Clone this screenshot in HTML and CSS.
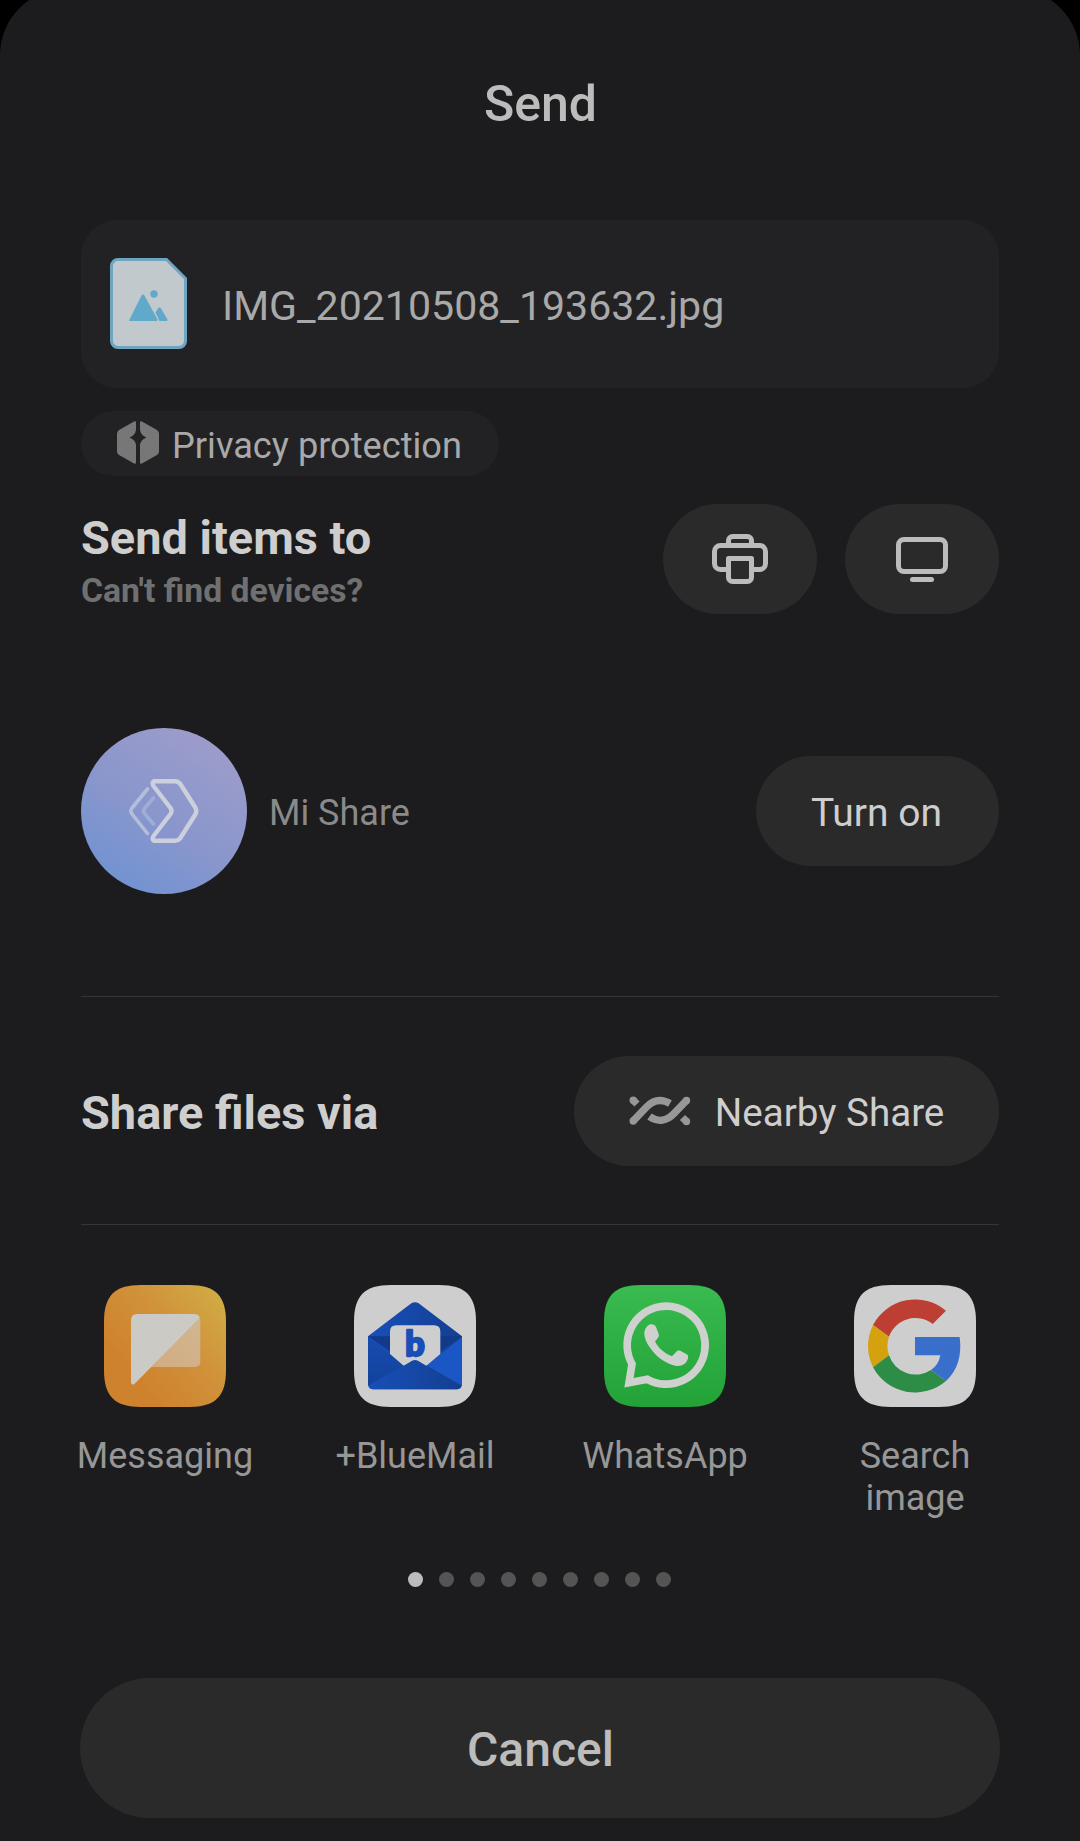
FILE: index.html
```html
<!DOCTYPE html>
<html lang="en">
<head>
  <meta charset="UTF-8">
  <meta name="viewport" content="width=device-width, initial-scale=1.0">
  <title>Send</title>
  <link rel="stylesheet" href="styles.css">
</head>
<body>
  <div class="sheet">
    <h1 class="title">Send</h1>

    <div class="file-card">
      <svg class="file-icon" viewBox="0 0 77 91">
        <path d="M8 1.5H56.5L75.5 20.5V83a6.500 6.500 0 0 1-6.500 6.500H8A6.500 6.500 0 0 1 1.500 83V8A6.500 6.500 0 0 1 8 1.500Z" fill="#c2c9cc" stroke="#6ea6c2" stroke-width="3"/>
        <path d="M31.500 37.500q1.500-2 3 0L47.500 61.500q.5 1.500-1 1.500H20.500q-2 0-1-1.500Z" fill="#61a9cb"/>
        <path d="M45.500 54.500L48 50.500q1.500-2 3 0L57.500 61.500q.5 1.500-1 1.500H49.500Z" fill="#61a9cb"/>
        <circle cx="44" cy="36" r="3.700" fill="#61a9cb"/>
      </svg>
      <span class="file-name">IMG_20210508_193632.jpg</span>
    </div>

    <div class="privacy">
      <svg class="privacy-icon" viewBox="0 0 42 43">
        <path d="M17.500 0.300Q19 0 19 1.500V9Q18 14.500 12.500 16.500Q18 18.500 19 23.500V41.500Q19 43 17.500 42.700L2 34Q0 32.500 0 30.500V12.500Q0 10.500 2 9Z"/>
        <path d="M24.500 0.300Q23 0 23 1.500V9Q24 14.500 29.500 16.500Q24 18.500 23 23.500V41.500Q23 43 24.500 42.700L40 34Q42 32.500 42 30.500V12.500Q42 10.500 40 9Z"/>
      </svg>
      <span>Privacy protection</span>
    </div>

    <div class="row send-row">
      <div class="send-text">
        <h2>Send items to</h2>
        <p>Can't find devices?</p>
      </div>
      <div class="device-buttons">
        <button class="pill icon-pill" aria-label="Print">
          <svg width="56" height="50" viewBox="0 0 56 50" fill="none" stroke="#bcbcbc" stroke-width="5">
            <path d="M16.500 11V6.500a4 4 0 0 1 4-4h15a4 4 0 0 1 4 4V11"/>
            <path d="M16 35.500H8.500a6 6 0 0 1-6-6v-12a6 6 0 0 1 6-6h39a6 6 0 0 1 6 6v12a6 6 0 0 1-6 6H40"/>
            <path d="M16.500 24.500h23v19a4 4 0 0 1-4 4h-15a4 4 0 0 1-4-4Z" stroke-linejoin="round"/>
          </svg>
        </button>
        <button class="pill icon-pill cast" aria-label="Cast">
          <svg width="52" height="46" viewBox="0 0 52 46" fill="none" stroke="#bcbcbc" stroke-width="5">
            <rect x="2.500" y="2.500" width="47" height="32" rx="5.500"/>
            <path d="M16.500 42.500h19" stroke-linecap="round"/>
          </svg>
        </button>
      </div>
    </div>

    <div class="row mi-row">
      <div class="mi-share">
        <div class="mi-avatar">
          <svg width="70" height="64" viewBox="0 0 70 64" fill="none" stroke-linecap="round" stroke-linejoin="round" stroke-width="4.400">
            <path d="M25 2.200H46Q49 2.200 51 4.500L66 28Q68.500 32 66 36L51 59.500Q49 61.800 46 61.800H25Q22.500 60.500 24.500 57L41.500 35Q43.500 32 41.500 29L24.500 7Q22.500 3.500 25 2.200Z" stroke="#ccd0dc"/>
            <path d="M18.500 10L3 29Q.7 32 3 35L18.500 54.500" stroke="#b3bedb" stroke-width="3.600"/>
            <path d="M24.500 19L15.500 29.500Q13.500 32 15.500 34.500L24.500 45" stroke="#9eaed8" stroke-width="3.600"/>
          </svg>
        </div>
        <span>Mi Share</span>
      </div>
      <button class="pill turn-on">Turn on</button>
    </div>

    <div class="row share-row">
      <h2>Share files via</h2>
      <button class="pill nearby">
        <svg width="62" height="30" viewBox="0 0 62 30" fill="none" stroke="#979797" stroke-width="7.400">
          <path d="M4.200 25L17 11.500C25 3 33 3 41 7.500"/>
          <path d="M20.500 20.500C29 26.500 38 25 45 17.500L57.500 4.500"/>
          <path d="M4.200 25h.01M57.500 4.500h.01M4.200 4.200h.01M57.500 25.500h.01" stroke-linecap="round"/>
          <path d="M4.200 4.200L8 8M53.500 21.500L57.500 25.500"/>
        </svg>
        <span>Nearby Share</span>
      </button>
    </div>

    <div class="apps">
      <div class="app">
        <svg class="app-icon" viewBox="0 0 366 366">
          <defs>
            <linearGradient id="msg" x1="0.250" y1="0.750" x2="1" y2="0.100">
              <stop offset="0" stop-color="#cf822e"/>
              <stop offset="0.500" stop-color="#d0923a"/>
              <stop offset="1" stop-color="#d1ac44"/>
            </linearGradient>
            <linearGradient id="msgFold" x1="0" y1="1" x2="1" y2="0">
              <stop offset="0" stop-color="#d4ab80"/>
              <stop offset="1" stop-color="#cfb792"/>
            </linearGradient>
            <path id="tile" d="M0 110C0 32 32 0 110 0H256C334 0 366 32 366 110V256C366 334 334 366 256 366H110C32 366 0 334 0 256Z"/>
          </defs>
          <use href="#tile" fill="url(#msg)"/>
          <path d="M141 246L285 94Q289 98 289 105V229Q289 246 272 246Z" fill="url(#msgFold)"/>
          <path d="M99 87H271Q280 87 286 94Q286 99 280 106L92 296Q81 303 81 291V105Q81 87 99 87Z" fill="#cbcac5"/>
        </svg>
        <span>Messaging</span>
      </div>
      <div class="app">
        <svg class="app-icon" viewBox="0 0 366 366">
          <defs>
            <linearGradient id="flap" x1="0" x2="1">
              <stop offset="0" stop-color="#184fb7"/>
              <stop offset="1" stop-color="#133f92"/>
            </linearGradient>
            <linearGradient id="side" x1="0" x2="0" y1="0" y2="1">
              <stop offset="0" stop-color="#174bb0"/>
              <stop offset="1" stop-color="#12429b"/>
            </linearGradient>
          </defs>
          <use href="#tile" fill="#cecece"/>
          <path d="M42 154L172 55Q183 48 194 55L324 154V297Q324 313 308 313H58Q42 313 42 297Z" fill="url(#flap)"/>
          <path d="M42 154H324L183 250Z" fill="#12398a"/>
          <path d="M42 156L149 241L42 302Z" fill="url(#side)"/>
          <path d="M324 156L217 241L324 302Z" fill="#1b57c4"/>
          <path d="M108 140Q108 121 127 121H240Q259 121 259 140V207L217 242L149 242L108 207Z" fill="#cecece"/>
          <path d="M46 303L168 231Q183 219 198 231L320 303Q317 313 308 313H58Q49 313 46 303Z" fill="url(#flap)"/>
          <text x="183" y="213" text-anchor="middle" class="bm-letter">b</text>
        </svg>
        <span>+BlueMail</span>
      </div>
      <div class="app">
        <svg class="app-icon" viewBox="0 0 366 366">
          <defs>
            <linearGradient id="wa" x1="0" x2="0" y1="0" y2="1">
              <stop offset="0" stop-color="#39bb50"/>
              <stop offset="1" stop-color="#22a237"/>
            </linearGradient>
          </defs>
          <use href="#tile" fill="url(#wa)"/>
          <path d="M84 237A117 117 0 1 1 130 283L75 293Z" fill="none" stroke="#cfd1cf" stroke-width="23"/>
          <path d="M139 118C148 117 153 119 156 126L164 147C166 153 164 157 153 169C164 191 181 205 204 214L217 200C221 196 225 196 230 198L248 208C253 211 254 214 251 223C246 238 232 244 220 243C204 242 179 232 157 211C136 190 122 166 121 148C120 133 130 120 139 118Z" fill="#cfd1cf"/>
        </svg>
        <span>WhatsApp</span>
      </div>
      <div class="app">
        <svg class="app-icon" viewBox="0 0 366 366">
          <use href="#tile" fill="#cecece"/>
          <path d="M57 120A143 143 0 0 1 276 77L236 117A84 84 0 0 0 105 155Z" fill="#bd3f33"/>
          <path d="M57 120A143 143 0 0 0 57 247L105 211A86 86 0 0 1 105 155Z" fill="#d5a10f"/>
          <path d="M57 247A143 143 0 0 0 276 288L231 255A84 84 0 0 1 105 211Z" fill="#2d8c46"/>
          <path d="M183 156H317Q328 240 276 288L231 255Q254 240 259 211H183Z" fill="#396fcb"/>
        </svg>
        <span>Search image</span>
      </div>
    </div>

    <div class="dots">
      <i class="dot active"></i>
      <i class="dot"></i>
      <i class="dot"></i>
      <i class="dot"></i>
      <i class="dot"></i>
      <i class="dot"></i>
      <i class="dot"></i>
      <i class="dot"></i>
      <i class="dot"></i>
    </div>

    <button class="cancel">Cancel</button>
  </div>
</body>
</html>
```

FILE: styles.css
```css
* { box-sizing: border-box; }
html { background: #000; }
body { margin: 0; height: 1841px; overflow: hidden; font-family: Roboto, sans-serif; display: flex; flex-direction: column; }
h1, h2, p { margin: 0; }
svg { display: block; flex: none; }
button { border: none; padding: 0; font-family: inherit; cursor: pointer; }

.sheet { flex: none; height: 1852px; margin-top: -11px; padding: 0 81px; background: #1c1c1e; border-radius: 66px 66px 0 0; display: flex; flex-direction: column; }
.title { height: 231px; padding-left: 1px; line-height: 230px; text-align: center; font-size: 50px; font-weight: 500; color: #bcbcbc; }

.file-card { height: 168px; padding-left: 29px; background: #222224; border-radius: 36px; display: flex; align-items: center; gap: 35px; }
.file-icon { width: 77px; height: 91px; margin-bottom: 2px; }
.file-name { padding-top: 4px; font-size: 41.1px; color: #a9a9a9; }

.privacy { align-self: flex-start; width: 418px; height: 65px; margin-top: 23px; padding-left: 36px; background: #222224; border-radius: 33px; display: flex; align-items: center; gap: 13px; font-size: 36.200px; color: #a9a9a9; }
.privacy-icon { width: 42px; height: 43px; fill: #777; margin-bottom: 2px; }
.privacy span { padding-top: 4px; white-space: nowrap; }

.row { display: flex; align-items: center; justify-content: space-between; }
h2 { font-size: 46.900px; line-height: 54px; font-weight: 700; color: #cecece; }
.pill { height: 110px; background: #2a2a2a; border-radius: 55px; display: flex; align-items: center; justify-content: center; font-size: 39px; color: #cecece; }

.send-row { height: 110px; margin-top: 28px; }
.send-text { padding-top: 10px; }
.send-text p { font-size: 33.700px; line-height: 52px; font-weight: 700; color: #707070; }
.device-buttons { display: flex; gap: 28px; }
.icon-pill { width: 154px; }
.cast { padding-top: 1px; }

.mi-row { height: 166px; margin-top: 114px; }
.mi-share { display: flex; align-items: center; gap: 22px; font-size: 36px; color: #8a8a8a; }
.mi-share span { padding-top: 3px; }
.mi-avatar { width: 166px; height: 166px; border-radius: 50%; background: linear-gradient(213deg, #a09dca 5%, #8996cc 55%, #6c92d3 95%); display: flex; align-items: center; justify-content: center; }
.turn-on { width: 243px; padding-top: 3px; padding-right: 2px; }

.share-row { height: 229px; margin-top: 102px; border-top: 1px solid #353537; border-bottom: 1px solid #353537; }
.share-row h2 { padding-top: 4px; }
.nearby { width: 425px; gap: 24px; font-size: 38.600px; }
.nearby span { padding-top: 4px; }

.apps { margin: 60px -41px 0; height: 244px; display: flex; }
.app { width: 250px; display: flex; flex-direction: column; align-items: center; gap: 28px; font-size: 36px; line-height: 42px; color: #979797; }
.app-icon { width: 122px; height: 122px; }
.app span { max-width: 200px; text-align: center; }
.app:last-child span { width: 120px; }
.bm-letter { font-family: Lato, sans-serif; font-size: 102px; font-weight: 900; fill: #184fb7; stroke: #184fb7; stroke-width: 7px; stroke-linejoin: round; }

.dots { margin: 43px 1px 0 0; display: flex; justify-content: center; gap: 16px; }
.dot { width: 15px; height: 15px; border-radius: 50%; background: #545454; }
.dot.active { background: #bcbcbc; }

.cancel { height: 140px; margin: 91px -1px 0; padding: 2px 0 0 1px; background: #2a2a2a; border-radius: 70px; font-size: 48px; font-weight: 500; color: #bcbcbc; }
```
